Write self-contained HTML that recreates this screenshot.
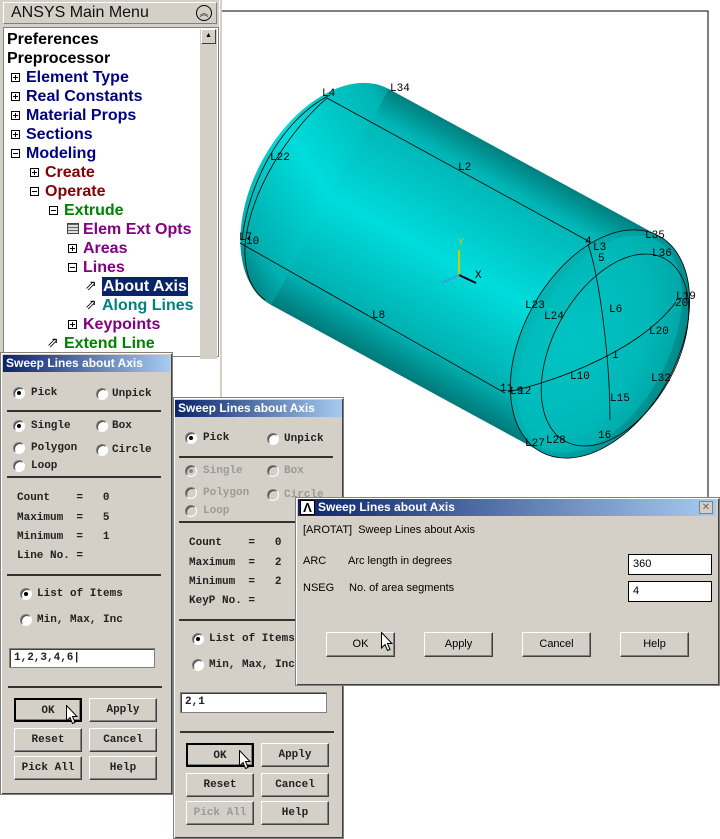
<!DOCTYPE html>
<html><head><meta charset="utf-8"><style>
*{margin:0;padding:0;box-sizing:border-box}
body{width:720px;height:839px;position:relative;overflow:hidden;background:#fff;font-family:"Liberation Sans",sans-serif}
.a{position:absolute}
.tree{font-weight:bold;font-size:16px;line-height:19px;white-space:nowrap}
.pm{position:absolute;width:9px;height:9px;border:1px solid #000;background:#fff;font-size:0}
.pm:before{content:"";position:absolute;left:1px;top:3px;width:5px;height:1px;background:#000}
.pm.p:after{content:"";position:absolute;left:3px;top:1px;width:1px;height:5px;background:#000}
.dlg{position:absolute;background:#d4d0c8;border:1px solid #808080;box-shadow:inset 1px 1px #fff,inset -1px -1px #404040}
.tb{position:absolute;height:17px;background:linear-gradient(90deg,#0a246a,#a6caf0);color:#fff;font-weight:bold;font-size:12px;line-height:17px;padding-left:3px;white-space:nowrap;overflow:hidden}
.m{font-family:"Liberation Mono",monospace;font-size:11px;font-weight:bold;color:#222;position:absolute;white-space:nowrap}
.g{color:#9a9a9a}
.r{position:absolute;width:12px;height:12px;border-radius:50%;background:#fff;border:1px solid #808080;border-right-color:#fff;border-bottom-color:#fff;box-shadow:inset 1px 1px #404040}
.r.on:after{content:"";position:absolute;left:3px;top:3px;width:4px;height:4px;border-radius:50%;background:#000}
.r.gd{background:#d4d0c8}
.r.gd:after{background:#888}
.sep{position:absolute;height:2px;background:#333}
.btn{position:absolute;height:24px;background:#d4d0c8;border:1px solid;border-color:#fff #404040 #404040 #fff;box-shadow:inset -1px -1px #808080;text-align:center;line-height:22px;font-family:"Liberation Mono",monospace;font-size:11px;font-weight:bold;color:#222}
.btn.d{border:2px solid #000}
.inp{position:absolute;background:#fff;border:1px solid #808080;box-shadow:inset 1px 1px #404040;font-family:"Liberation Mono",monospace;font-size:11px;font-weight:bold;padding:3px 0 0 4px;color:#222}
.s{font-family:"Liberation Sans",sans-serif;font-size:11px;color:#000;position:absolute;white-space:nowrap}
.b3{position:absolute;height:25px;top:632px;width:69px;background:#d4d0c8;border:1px solid;border-color:#fff #404040 #404040 #fff;box-shadow:inset -1px -1px #808080;text-align:center;line-height:23px;font-size:11px}
.cur{position:absolute;width:12px;height:19px}
</style></head><body>
<svg class="a" style="left:0;top:0" width="720" height="839">
<defs>
<linearGradient id="bg" gradientUnits="userSpaceOnUse" x1="389" y1="89" x2="271" y2="305">
<stop offset="0" stop-color="#007f7f"/><stop offset="0.12" stop-color="#00b4b4"/><stop offset="0.5" stop-color="#00dcdc"/><stop offset="0.85" stop-color="#00b0b0"/><stop offset="1" stop-color="#007878"/></linearGradient>
<radialGradient id="cg" cx="0.35" cy="0.55" r="0.7"><stop offset="0" stop-color="#00c8c8"/><stop offset="0.6" stop-color="#00b0b0"/><stop offset="1" stop-color="#008080"/></radialGradient>
</defs>
<rect x="220" y="0" width="2" height="500" fill="#d4d0c8"/>
<path d="M222 11H708V500" fill="none" stroke="#000" stroke-width="1"/>
<ellipse cx="330" cy="197" rx="77" ry="123" transform="rotate(28.6 330 197)" fill="url(#bg)"/>
<line x1="330" y1="197" x2="600" y2="344" stroke="url(#bg)" stroke-width="246"/>
<ellipse cx="600" cy="344" rx="77" ry="123" transform="rotate(28.6 600 344)" fill="url(#cg)"/>
<ellipse cx="600" cy="344" rx="68" ry="118" transform="rotate(28.6 600 344)" fill="#00c0c0" opacity=".5"/>
<g fill="none" stroke="#000" stroke-width="0.8">
<line x1="327" y1="98" x2="590" y2="242"/>
<line x1="240" y1="243" x2="505" y2="393"/>
<path d="M327 98C290 130 250 190 245 245C244 270 250 290 265 300"/>
<path d="M242 240C248 185 280 120 330 95"/>
<ellipse cx="600" cy="344" rx="77" ry="123" transform="rotate(28.6 600 344)"/>
<ellipse cx="615" cy="350" rx="62" ry="104" transform="rotate(28.6 615 350)"/>
<path d="M588 244C600 280 610 360 610 420"/>
<path d="M508 392C560 380 640 350 676 302"/>
</g>
<g font-family="Liberation Mono,monospace" font-size="11" fill="#000">
<text x="322" y="96">L4</text><text x="390" y="91">L34</text><text x="270" y="160">L22</text><text x="458" y="170">L2</text>
<text x="239" y="240">L7</text><text x="246" y="244">10</text><text x="372" y="318">L8</text>
<text x="585" y="244">4</text><text x="593" y="250">L3</text><text x="598" y="261">5</text><text x="645" y="238">L35</text><text x="652" y="256">L36</text>
<text x="676" y="299">L19</text><text x="675" y="306">20</text><text x="525" y="308">L23</text><text x="544" y="319">L24</text><text x="609" y="312">L6</text>
<text x="649" y="334">L20</text><text x="612" y="358">1</text><text x="570" y="379">L10</text><text x="651" y="381">L32</text>
<text x="500" y="391">11</text><text x="510" y="394">L9</text><text x="518" y="394">12</text><text x="610" y="401">L15</text>
<text x="525" y="446">L27</text><text x="546" y="443">L28</text><text x="598" y="438">16</text>
<text x="458" y="245" fill="#cccc00" font-size="10">Y</text><text x="475" y="278">X</text>
</g>
<line x1="459" y1="250" x2="459" y2="275" stroke="#cccc00" stroke-width="2"/>
<line x1="459" y1="275" x2="476" y2="283" stroke="#000" stroke-width="2"/>
<line x1="459" y1="275" x2="442" y2="283" stroke="#3aa0e0" stroke-width="2"/>
</svg>
<div class="a" style="left:0;top:0;width:219px;height:352px;background:#d4d0c8"></div>
<div class="a" style="left:3px;top:2px;width:214px;height:22px;border:1px solid;border-color:#fff #808080 #808080 #fff;font-size:16px;line-height:20px;padding-left:7px;color:#111">ANSYS Main Menu<span class="a" style="right:4px;top:2px;width:16px;height:16px;border:1px solid #000;border-radius:50%;font-size:9px;line-height:14px;text-align:center">︽</span></div>
<div class="a" style="left:3px;top:27px;width:216px;height:330px;background:#fff;border:1px solid #808080"></div>
<div class="a" style="left:200px;top:29px;width:17px;height:330px;background:#d4d0c8"></div>
<div class="a" style="left:201px;top:29px;width:15px;height:15px;border:1px solid;border-color:#fff #404040 #404040 #fff;font-size:7px;text-align:center;line-height:12px">▲</div>
<div class="a tree" style="left:7px;top:30px;color:#000">Preferences</div>
<div class="a tree" style="left:7px;top:49px;color:#000">Preprocessor</div>
<div class="pm p" style="left:11px;top:73px"></div><div class="a tree" style="left:26px;top:68px;color:#000080">Element Type</div>
<div class="pm p" style="left:11px;top:92px"></div><div class="a tree" style="left:26px;top:87px;color:#000080">Real Constants</div>
<div class="pm p" style="left:11px;top:111px"></div><div class="a tree" style="left:26px;top:106px;color:#000080">Material Props</div>
<div class="pm p" style="left:11px;top:130px"></div><div class="a tree" style="left:26px;top:125px;color:#000080">Sections</div>
<div class="pm" style="left:11px;top:149px"></div><div class="a tree" style="left:26px;top:144px;color:#000080">Modeling</div>
<div class="pm p" style="left:30px;top:168px"></div><div class="a tree" style="left:45px;top:163px;color:#800000">Create</div>
<div class="pm" style="left:30px;top:187px"></div><div class="a tree" style="left:45px;top:182px;color:#800000">Operate</div>
<div class="pm" style="left:49px;top:206px"></div><div class="a tree" style="left:64px;top:201px;color:#008000">Extrude</div>
<div class="a" style="left:67px;top:223px;width:12px;height:11px;border:1px solid #444;background:repeating-linear-gradient(#666 0 1px,#ddd 1px 3px)"></div><div class="a tree" style="left:83px;top:220px;color:#800080">Elem Ext Opts</div>
<div class="pm p" style="left:68px;top:244px"></div><div class="a tree" style="left:83px;top:239px;color:#800080">Areas</div>
<div class="pm" style="left:68px;top:263px"></div><div class="a tree" style="left:83px;top:258px;color:#800080">Lines</div>
<div class="a" style="left:85px;top:277px;font-size:14px">⇗</div><div class="a tree" style="left:102px;top:277px;color:#fff;background:#0a246a;padding:0 1px">About Axis</div>
<div class="a" style="left:85px;top:296px;font-size:14px">⇗</div><div class="a tree" style="left:102px;top:296px;color:#008080">Along Lines</div>
<div class="pm p" style="left:68px;top:320px"></div><div class="a tree" style="left:83px;top:315px;color:#800080">Keypoints</div>
<div class="a" style="left:47px;top:334px;font-size:14px">⇗</div><div class="a tree" style="left:64px;top:334px;color:#008000">Extend Line</div>
<div class="dlg" style="left:0;top:352px;width:173px;height:443px"></div>
<div class="tb" style="left:3px;top:355px;width:167px">Sweep Lines about Axis</div>
<div class="r on" style="left:13px;top:387px"></div><div class="m" style="left:31px;top:387px">Pick</div>
<div class="r" style="left:96px;top:388px"></div><div class="m" style="left:112px;top:388px">Unpick</div>
<div class="sep" style="left:7px;top:410px;width:154px"></div>
<div class="r on" style="left:13px;top:420px"></div><div class="m" style="left:31px;top:420px">Single</div>
<div class="r" style="left:96px;top:420px"></div><div class="m" style="left:112px;top:420px">Box</div>
<div class="r" style="left:13px;top:442px"></div><div class="m" style="left:31px;top:442px">Polygon</div>
<div class="r" style="left:96px;top:444px"></div><div class="m" style="left:112px;top:444px">Circle</div>
<div class="r" style="left:13px;top:460px"></div><div class="m" style="left:31px;top:460px">Loop</div>
<div class="sep" style="left:7px;top:476px;width:154px"></div>
<div class="m" style="left:17px;top:492px">Count&nbsp;&nbsp;&nbsp;&nbsp;=&nbsp;&nbsp;&nbsp;0</div>
<div class="m" style="left:17px;top:512px">Maximum&nbsp;&nbsp;=&nbsp;&nbsp;&nbsp;5</div>
<div class="m" style="left:17px;top:531px">Minimum&nbsp;&nbsp;=&nbsp;&nbsp;&nbsp;1</div>
<div class="m" style="left:17px;top:550px">Line No. =</div>
<div class="sep" style="left:7px;top:574px;width:154px"></div>
<div class="r on" style="left:20px;top:588px"></div><div class="m" style="left:37px;top:588px">List of Items</div>
<div class="r" style="left:20px;top:614px"></div><div class="m" style="left:37px;top:614px">Min, Max, Inc</div>
<div class="inp" style="left:9px;top:648px;width:146px;height:20px">1,2,3,4,6|</div>
<div class="sep" style="left:8px;top:686px;width:154px"></div>
<div class="btn d" style="left:14px;top:698px;width:68px">OK</div>
<div class="btn" style="left:89px;top:698px;width:68px">Apply</div>
<div class="btn" style="left:14px;top:728px;width:68px">Reset</div>
<div class="btn" style="left:89px;top:728px;width:68px">Cancel</div>
<div class="btn" style="left:14px;top:756px;width:68px">Pick All</div>
<div class="btn" style="left:89px;top:756px;width:68px">Help</div>
<svg class="cur" style="left:66px;top:705px" viewBox="0 0 12 19"><path d="M.5 .5V16l3.5-3.5 2.5 6 2.5-1-2.5-6H11z" fill="#fff" stroke="#000"/></svg>
<div class="dlg" style="left:173px;top:397px;width:171px;height:442px"></div>
<div class="tb" style="left:175px;top:400px;width:167px">Sweep Lines about Axis</div>
<div class="r on" style="left:185px;top:432px"></div><div class="m" style="left:203px;top:432px">Pick</div>
<div class="r" style="left:267px;top:433px"></div><div class="m" style="left:284px;top:433px">Unpick</div>
<div class="sep" style="left:179px;top:456px;width:154px"></div>
<div class="r gd on" style="left:185px;top:465px"></div><div class="m g" style="left:203px;top:465px">Single</div>
<div class="r gd" style="left:267px;top:465px"></div><div class="m g" style="left:284px;top:465px">Box</div>
<div class="r gd" style="left:185px;top:487px"></div><div class="m g" style="left:203px;top:487px">Polygon</div>
<div class="r gd" style="left:267px;top:489px"></div><div class="m g" style="left:284px;top:489px">Circle</div>
<div class="r gd" style="left:185px;top:505px"></div><div class="m g" style="left:203px;top:505px">Loop</div>
<div class="sep" style="left:179px;top:521px;width:154px"></div>
<div class="m" style="left:189px;top:537px">Count&nbsp;&nbsp;&nbsp;&nbsp;=&nbsp;&nbsp;&nbsp;0</div>
<div class="m" style="left:189px;top:557px">Maximum&nbsp;&nbsp;=&nbsp;&nbsp;&nbsp;2</div>
<div class="m" style="left:189px;top:576px">Minimum&nbsp;&nbsp;=&nbsp;&nbsp;&nbsp;2</div>
<div class="m" style="left:189px;top:595px">KeyP No. =</div>
<div class="sep" style="left:179px;top:619px;width:154px"></div>
<div class="r on" style="left:192px;top:633px"></div><div class="m" style="left:209px;top:633px">List of Items</div>
<div class="r" style="left:192px;top:659px"></div><div class="m" style="left:209px;top:659px">Min, Max, Inc</div>
<div class="inp" style="left:180px;top:692px;width:147px;height:21px">2,1</div>
<div class="sep" style="left:180px;top:731px;width:154px"></div>
<div class="btn d" style="left:186px;top:743px;width:68px">OK</div>
<div class="btn" style="left:261px;top:743px;width:68px">Apply</div>
<div class="btn" style="left:186px;top:773px;width:68px">Reset</div>
<div class="btn" style="left:261px;top:773px;width:68px">Cancel</div>
<div class="btn" style="left:186px;top:801px;width:68px;color:#999">Pick All</div>
<div class="btn" style="left:261px;top:801px;width:68px">Help</div>
<svg class="cur" style="left:239px;top:750px" viewBox="0 0 12 19"><path d="M.5 .5V16l3.5-3.5 2.5 6 2.5-1-2.5-6H11z" fill="#fff" stroke="#000"/></svg>
<div class="dlg" style="left:295px;top:497px;width:425px;height:189px"></div>
<div class="tb" style="left:298px;top:499px;width:418px;padding-left:20px">Sweep Lines about Axis</div>
<div class="a" style="left:300px;top:500px;width:15px;height:15px;background:#fff;border:1px solid #000;font-weight:bold;font-size:13px;line-height:13px;text-align:center">Λ</div>
<div class="a" style="left:699px;top:501px;width:14px;height:13px;background:#d4d0c8;border:1px solid #808080;font-size:10px;line-height:11px;text-align:center;color:#666">✕</div>
<div class="s" style="left:303px;top:524px">[AROTAT]&nbsp; Sweep Lines about Axis</div>
<div class="s" style="left:303px;top:555px">ARC</div><div class="s" style="left:348px;top:555px">Arc length in degrees</div>
<div class="s" style="left:303px;top:582px">NSEG</div><div class="s" style="left:349px;top:582px">No. of area segments</div>
<div class="a s" style="left:628px;top:554px;width:84px;height:21px;background:#fff;border:1px solid #000;padding:3px 0 0 4px">360</div>
<div class="a s" style="left:628px;top:581px;width:84px;height:21px;background:#fff;border:1px solid #000;padding:3px 0 0 4px">4</div>
<div class="b3" style="left:326px">OK</div>
<div class="b3" style="left:424px">Apply</div>
<div class="b3" style="left:522px">Cancel</div>
<div class="b3" style="left:620px">Help</div>
<svg class="cur" style="left:381px;top:632px" viewBox="0 0 12 19"><path d="M.5 .5V16l3.5-3.5 2.5 6 2.5-1-2.5-6H11z" fill="#fff" stroke="#000"/></svg>
</body></html>
